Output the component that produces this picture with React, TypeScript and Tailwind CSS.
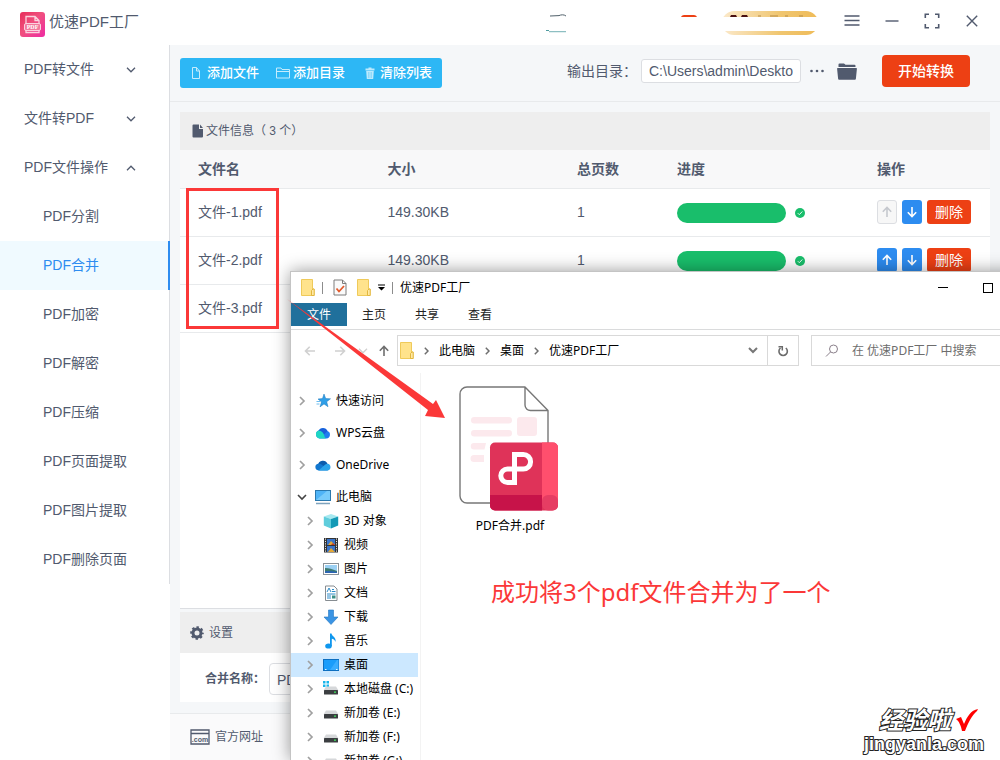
import React from 'react'

const menuGroups = [
  { label: 'PDF转文件', open: false },
  { label: '文件转PDF', open: false },
  { label: 'PDF文件操作', open: true },
]

const subItems = [
  'PDF分割',
  'PDF合并',
  'PDF加密',
  'PDF解密',
  'PDF压缩',
  'PDF页面提取',
  'PDF图片提取',
  'PDF删除页面',
]

const files = [
  { name: '文件-1.pdf', size: '149.30KB', pages: 1 },
  { name: '文件-2.pdf', size: '149.30KB', pages: 1 },
  { name: '文件-3.pdf', size: '149.30KB', pages: 1 },
]

type IconProps = { className?: string }

function Logo() {
  return (
    <svg width="25" height="25" viewBox="0 0 25 25">
      <defs>
        <linearGradient id="logo" x1="0" y1="0" x2="1" y2="1">
          <stop offset="0" stopColor="#e72d5a" />
          <stop offset="0.45" stopColor="#f0507e" />
          <stop offset="1" stopColor="#ee2ba4" />
        </linearGradient>
      </defs>
      <rect width="25" height="25" rx="3" fill="url(#logo)" />
      <path
        d="M6 13V4.5h9l4 4V13M15 4.5v4h4M6 18v2.5h13V18"
        fill="none"
        stroke="#fbd3df"
        strokeWidth="1.3"
      />
      <rect x="4.5" y="11.5" width="16" height="7" rx="1.5" fill="#f27a9d" stroke="#fbd3df" />
      <text
        x="12.5"
        y="17.2"
        fontSize="6"
        fontWeight="700"
        textAnchor="middle"
        fill="#fff"
        fontFamily="Liberation Serif, serif"
      >
        PDF
      </text>
    </svg>
  )
}

function Chevron({ className }: IconProps) {
  return (
    <svg width="10" height="6" viewBox="0 0 10 6" className={className}>
      <path d="M1 .8l4 4 4-4" fill="none" stroke="currentColor" strokeWidth="1.3" />
    </svg>
  )
}

function Promo() {
  return (
    <svg width="275" height="26" viewBox="0 0 275 26" aria-hidden="true">
      <defs>
        <linearGradient id="gold">
          <stop offset="0" stopColor="#fbe9cb" />
          <stop offset="0.6" stopColor="#f0c670" />
          <stop offset="1" stopColor="#efbb58" />
        </linearGradient>
      </defs>
      <path d="M5 6l9-.4M14 5.600c2-1 5-1.200 7 .4" stroke="#50606a" fill="none" />
      <path d="M4 21.500h17" stroke="#8dbfc2" strokeWidth="1.500" fill="none" />
      <path d="M136 7c1-2 3-2 4-2h8c1 0 3 0 4 2z" fill="#ed4014" />
      <rect x="177" y="1" width="96" height="24" rx="12" fill="url(#gold)" />
      <path d="M186 5h5l1 2h-7zM197 5h5l1 2h-7z" fill="#4a1010" />
      <path d="M213 6h3M225 6h8M240 6h3M254 6h4" stroke="#b78b45" />
      <rect x="0" y="7" width="275" height="14" fill="#fff" />
      <path d="M1 20.500h3" stroke="#4f9ba0" />
    </svg>
  )
}

function DocIcon({ className }: IconProps) {
  return (
    <svg width="12" height="14" viewBox="0 0 12 14" className={className} fill="currentColor">
      <path d="M1.500.5H7V5h4v7.500a1 1 0 0 1-1 1H1.500a1 1 0 0 1-1-1v-11a1 1 0 0 1 1-1z" />
      <path d="M8 .6L11 4H8z" />
    </svg>
  )
}

function YellowFolder() {
  return (
    <svg width="14" height="17" viewBox="0 0 14 17" className="shrink-0">
      <path d="M.5.5h11V10h1.500v6.500H.5z" fill="#ffe38c" stroke="#efca5a" />
      <path d="M10.500 16.500V11.500L12 10h1.200v6.500z" fill="#ffe9a6" stroke="#e2b73f" />
    </svg>
  )
}

function RightChevron({ className }: IconProps) {
  return (
    <svg width="5" height="8" viewBox="0 0 5 8" className={className}>
      <path d="M.8.8L4 4 .8 7.200" fill="none" stroke="currentColor" strokeWidth="1.500" />
    </svg>
  )
}

function Arrow({ className }: IconProps) {
  return (
    <svg width="12" height="12" viewBox="0 0 12 12" className={className}>
      <path d="M6 11V1.500M1.800 5.700L6 1.500l4.200 4.200" fill="none" stroke="currentColor" strokeWidth="1.600" />
    </svg>
  )
}

const drive = (
  <>
    <path d="M3 5.500h10l2.500 4H.5z" fill="#d6d8da" />
    <rect x="1" y="9" width="14" height="4.500" rx=".6" fill="#3b3e41" />
    <rect x="11" y="10.500" width="2" height="1.300" fill="#3fe05c" />
  </>
)

const treeIcons: Record<string, React.ReactNode> = {
  quick: (
    <>
      <path d="M9 1l1.700 4.600 4.800.2-3.800 3 1.300 4.900-4-2.800-4 3 1.500-4.900L3 6l4.500-.4z" fill="#2f9fe8" stroke="#1b77bb" strokeWidth=".5" />
      <path d="M1.500 8.500h3.500M1.500 11h3" stroke="#6bbdf0" />
    </>
  ),
  wps: (
    <>
      <path d="M4.500 13.500a4.200 4.200 0 0 1-1-8A5 5 0 0 1 12.500 6a3.900 3.900 0 0 1-1 7.500z" fill="#1f7df0" />
      <path d="M4.500 13.500a4.200 4.200 0 0 1-1-8c2.500-.6 5 1.200 5.500 4 .3 1.800 1 3.300 2 4z" fill="#1ed6c3" />
      <path d="M3.800 5.400a5 5 0 0 1 8.700.6L9 9.500C8.500 7.500 6.500 5.800 3.800 5.400z" fill="#1a5fd8" />
    </>
  ),
  onedrive: (
    <>
      <path d="M3 8a5 5 0 0 1 9.500-1.200L8 11z" fill="#0b5cad" />
      <path d="M3.500 13.500A3.400 3.400 0 0 1 3 6.800c2-.5 3.600.6 5 1.700l5 5z" fill="#1277cf" />
      <path d="M12.500 6.800a3.400 3.400 0 0 1 .3 6.700H3.500L8 9.500c1.500-1.500 3-2.700 4.500-2.700z" fill="#2aa4ea" />
    </>
  ),
  pc: (
    <>
      <rect x=".5" y="1.500" width="15" height="10" fill="#4fb4f7" stroke="#2b78ad" />
      <path d="M1 11L12 2h3v9z" fill="#77cbfb" />
      <path d="M1 14.500h14" stroke="#7ea3bd" strokeWidth="1.500" />
    </>
  ),
  cube: (
    <>
      <path d="M.8 3.500L8 1l7.200 2.500L8 6z" fill="#a7e9f0" />
      <path d="M.8 3.500L8 6v9.500L.8 12.500z" fill="#5fcddc" />
      <path d="M15.200 3.500L8 6v9.500l7.200-3z" fill="#1399b5" />
    </>
  ),
  video: (
    <>
      <rect x="1" y="1" width="14" height="14.500" fill="#333" />
      <path d="M2.500 1.500v14M13.500 1.500v14" stroke="#e8e8e8" strokeDasharray="1.200 1.200" />
      <rect x="4" y="2" width="8" height="6" fill="#3974c9" />
      <rect x="4" y="9" width="8" height="6" fill="#3974c9" />
      <path d="M5 8l3-4 4 4zM5 15l3-4 4 4z" fill="#e3a735" />
      <path d="M8 8l2-2 2 2z" fill="#c23a2b" />
    </>
  ),
  picture: (
    <>
      <rect x=".5" y="2.500" width="15" height="11" fill="#fff" stroke="#8a9299" />
      <rect x="2" y="4" width="12" height="8" fill="#9bd0f3" />
      <path d="M2 7c4 0 7 1 12 3v2H2z" fill="#3c7a70" />
      <path d="M2 10.500c4-1 8 0 12 .5v1H2z" fill="#2b64b4" />
    </>
  ),
  doc: (
    <>
      <path d="M2.500 1h8.500l3 3v11.500H2.500z" fill="#fff" stroke="#868c91" />
      <path d="M4 7l2-4 2 4M9 4.500h2M9 6.500h3.500M4 9h8.500M4 11h4M4 13h4" stroke="#2e8cc9" fill="none" />
      <rect x="9" y="10.500" width="3.500" height="3" fill="#3f8f87" />
    </>
  ),
  download: <path d="M5.500 1h5v7H15l-7 7.500L1 8h4.500z" fill="#3a94e4" stroke="#2477c1" strokeWidth=".6" />,
  music: (
    <>
      <ellipse cx="5.500" cy="13" rx="3.300" ry="2.600" fill="#0f97ee" />
      <path d="M7 13V.5h1.500c.5 3 5 3.500 4 8.500-.5-2-2-3-3.700-3.200V13z" fill="#0f97ee" />
    </>
  ),
  desktop: (
    <>
      <rect x=".5" y="2.500" width="15" height="11" fill="#1a9dfb" stroke="#0d6fc0" />
      <path d="M7 13l7-10h1.500v10z" fill="#39adff" />
      <path d="M2 12.500h1.500M13 12.500h1.500" stroke="#e9f5ff" />
    </>
  ),
  system: (
    <>
      <path d="M0 0h2.500v2.500H0zM3.500 0H6v2.500H3.500zM0 3.500h2.500V6H0zM3.500 3.500H6V6H3.500z" fill="#19b5ea" />
      {drive}
    </>
  ),
  drive,
}

const tree = [
  { icon: 'quick', label: '快速访问' },
  { icon: 'wps', label: 'WPS云盘' },
  { icon: 'onedrive', label: 'OneDrive' },
]

const pcChildren = [
  { icon: 'cube', label: '3D 对象' },
  { icon: 'video', label: '视频' },
  { icon: 'picture', label: '图片' },
  { icon: 'doc', label: '文档' },
  { icon: 'download', label: '下载' },
  { icon: 'music', label: '音乐' },
  { icon: 'desktop', label: '桌面', active: true },
  { icon: 'system', label: '本地磁盘 (C:)' },
  { icon: 'drive', label: '新加卷 (E:)' },
  { icon: 'drive', label: '新加卷 (F:)' },
  { icon: 'drive', label: '新加卷 (G:)' },
]

function TreeIcon({ name }: { name: string }) {
  return (
    <svg width="16" height="16" viewBox="0 0 16 16" className="mr-[5px] shrink-0">
      {treeIcons[name]}
    </svg>
  )
}

function TreeChevron() {
  return (
    <svg width="8" height="10" viewBox="0 0 8 10" className="mr-2 shrink-0">
      <path d="M1 1l4 4-4 4" fill="none" stroke="#a0a0a0" strokeWidth="1.700" />
    </svg>
  )
}

function Header() {
  return (
    <header className="flex h-[45px] shrink-0 items-center bg-white pl-5 pr-2">
      <span className="mt-1">
        <Logo />
      </span>
      <h1 className="ml-1 flex-1 text-[15px]">优速PDF工厂</h1>
      <Promo />
      <div className="ml-3 flex items-center pb-[3px]">
        <button aria-label="菜单" className="flex h-8 w-10 items-center justify-center">
          <svg width="16" height="12" viewBox="0 0 16 12" stroke="currentColor" strokeWidth="1.400">
            <path d="M.5 1h15M.5 5.500h15M.5 10h15" />
          </svg>
        </button>
        <button aria-label="最小化" className="flex h-8 w-10 items-center justify-center">
          <svg width="14" height="2" viewBox="0 0 14 2" fill="currentColor">
            <path d="M.5.3h13v1.400H.5z" />
          </svg>
        </button>
        <button aria-label="最大化" className="flex h-8 w-10 items-center justify-center">
          <svg width="16" height="16" viewBox="0 0 16 16" fill="none" stroke="currentColor" strokeWidth="1.600">
            <path d="M5 1.300H1.300V5M11 1.300h3.700V5M5 14.700H1.300V11M11 14.700h3.700V11" />
          </svg>
        </button>
        <button aria-label="关闭" className="flex h-8 w-10 items-center justify-center">
          <svg width="12" height="12" viewBox="0 0 12 12" stroke="currentColor" strokeWidth="1.400">
            <path d="M.8.8l10.400 10.400M11.200.8L.8 11.200" />
          </svg>
        </button>
      </div>
    </header>
  )
}

function Sidebar() {
  return (
    <aside className="w-[170px] shrink-0 bg-white text-sm">
      <nav className="border-r border-[#dcdee2]">
        {menuGroups.map((group) => (
          <button
            key={group.label}
            className="flex h-[49px] w-full items-center justify-between pr-[33px] pb-[2px] pl-6"
          >
            {group.label}
            <Chevron className={group.open ? 'mt-[2px] rotate-180' : 'mt-[2px]'} />
          </button>
        ))}
        {subItems.map((item) => (
          <a
            key={item}
            href="#"
            className={
              item === 'PDF合并'
                ? '-mr-px flex h-[49px] items-center border-r-2 border-[#2d8cf0] bg-[#f0faff] pb-[2px] pl-[43px] text-[#2d8cf0]'
                : 'flex h-[49px] items-center pb-[2px] pl-[43px]'
            }
          >
            {item}
          </a>
        ))}
      </nav>
    </aside>
  )
}

function Toolbar() {
  return (
    <div className="flex h-[57px] shrink-0 items-center border-b border-[#e8eaec] px-[10px]">
      <div className="flex h-[30px] items-center rounded-[3px] bg-[#2db7f5] px-[10px] text-[13px] font-medium text-white">
        <button className="flex items-center">
          <svg width="12" height="12" viewBox="0 0 12 12" fill="none" stroke="#c5ecfd" className="mr-[5px]">
            <path d="M2.500.5h4L9.500 4v7.500h-7zM6.500.5V4h3" />
          </svg>
          添加文件
        </button>
        <button className="ml-[17px] flex items-center">
          <svg width="14" height="12" viewBox="0 0 14 12" fill="none" stroke="#c5ecfd" className="mr-[3px]">
            <path d="M.5 11V1h4.500l1 1.500h7.500V11zM.5 4.500h13" />
          </svg>
          添加目录
        </button>
        <button className="ml-[19px] flex items-center">
          <svg width="12" height="12" viewBox="0 0 12 12" className="mr-1">
            <path d="M1.500 1.500h3v-1h3v1h3v2h-9zM2.200 4h7.600l-.6 8H2.800z" fill="#bdeafd" />
            <path d="M4.500 5v6M6 5v6M7.500 5v6" stroke="#6fcdf8" strokeWidth=".6" />
          </svg>
          清除列表
        </button>
      </div>
      <div className="ml-auto flex items-center pb-1">
        <label htmlFor="output" className="text-sm">
          输出目录：
        </label>
        <input
          id="output"
          readOnly
          defaultValue="C:\Users\admin\Deskto"
          className="ml-1 h-6 w-40 rounded-[3px] border border-[#dcdee2] bg-white px-[7px] text-sm"
        />
        <button aria-label="更多" className="ml-2">
          <svg width="16" height="4" viewBox="0 0 16 4" fill="currentColor">
            <circle cx="2.500" cy="2" r="1.300" />
            <circle cx="8" cy="2" r="1.300" />
            <circle cx="13.500" cy="2" r="1.300" />
          </svg>
        </button>
        <button aria-label="打开目录" className="ml-3">
          <svg width="20" height="17" viewBox="0 0 20 17" fill="currentColor">
            <path d="M1.500 4V1.500a1 1 0 0 1 1-1h4.500l1.500 1.300h9a1 1 0 0 1 1 1V4z" />
            <path d="M.8 5h18.400a.7.7 0 0 1 .7.8l-1 10a1 1 0 0 1-1 .9H2.100a1 1 0 0 1-1-.9l-1-10A.7.7 0 0 1 .8 5z" />
          </svg>
        </button>
        <button className="mr-[20px] ml-[25px] h-8 w-[88px] rounded bg-[#ed4014] text-sm font-medium text-white">
          开始转换
        </button>
      </div>
    </div>
  )
}

function FileTable() {
  return (
    <section className="flex min-h-0 flex-1 flex-col border-b border-[#dcdee2] bg-white">
      <h2 className="flex h-[38px] shrink-0 items-center bg-[#eeeeee] pl-3 text-xs">
        <DocIcon className="mr-[2px]" />
        文件信息（ 3 个）
      </h2>
      <table className="w-full table-fixed text-left text-sm">
        <colgroup>
          <col />
          <col />
          <col className="w-[100px]" />
          <col className="w-[200px]" />
          <col className="w-[131px]" />
        </colgroup>
        <thead>
          <tr className="h-[38px] border-b border-[#e8eaec] bg-[#f8f8f9]">
            <th className="pl-[18px]">文件名</th>
            <th className="pl-[18px]">大小</th>
            <th className="pl-[18px]">总页数</th>
            <th className="pl-[18px]">进度</th>
            <th className="pl-[18px]">操作</th>
          </tr>
        </thead>
        <tbody>
          {files.map((file, i) => (
            <tr key={file.name} className="h-12 border-b border-[#e8eaec]">
              <td className="pl-[18px]">{file.name}</td>
              <td className="pl-[18px]">{file.size}</td>
              <td className="pl-[18px]">{file.pages}</td>
              <td className="pl-[18px]">
                <div className="flex items-center pt-px">
                  <div className="h-5 w-[109px] rounded-full bg-[#19be6b]" />
                  <svg width="10" height="10" viewBox="0 0 10 10" className="ml-[9px]">
                    <circle cx="5" cy="5" r="5" fill="#19be6b" />
                    <path d="M2.800 5.200l1.500 1.500 3-3.200" fill="none" stroke="#e8fbf1" />
                  </svg>
                </div>
              </td>
              <td className="pl-[18px]">
                <div className="flex gap-[5px]">
                  <button
                    aria-label="上移"
                    disabled={i === 0}
                    className={
                      i === 0
                        ? 'flex h-6 w-5 items-center justify-center rounded-[3px] border border-[#dcdee2] bg-[#f7f7f7] text-[#c5c8ce]'
                        : 'flex h-6 w-5 items-center justify-center rounded-[3px] bg-[#2d8cf0] text-white'
                    }
                  >
                    <Arrow className="shrink-0" />
                  </button>
                  <button
                    aria-label="下移"
                    className="flex h-6 w-5 items-center justify-center rounded-[3px] bg-[#2d8cf0] text-white"
                  >
                    <Arrow className="shrink-0 rotate-180" />
                  </button>
                  <button className="h-6 w-11 rounded-[3px] bg-[#ed4014] text-sm text-white">
                    删除
                  </button>
                </div>
              </td>
            </tr>
          ))}
        </tbody>
      </table>
    </section>
  )
}

function Settings() {
  return (
    <section className="mt-[3px] mb-[11px] shrink-0 bg-white">
      <h2 className="flex h-[41px] items-center bg-[#eeeeee] pl-[10px] text-xs">
        <svg width="14" height="14" viewBox="0 0 14 14" className="mr-[5px]">
          <circle cx="7" cy="7" r="4" fill="none" stroke="currentColor" strokeWidth="3" />
          <circle cx="7" cy="7" r="5.700" fill="none" stroke="currentColor" strokeWidth="2.200" strokeDasharray="2.400 2.077" strokeDashoffset="1.200" />
        </svg>
        设置
      </h2>
      <div className="flex h-[49px] items-center pt-[2px] pl-[25px]">
        <label htmlFor="merge-name" className="mr-1 text-xs font-bold">
          合并名称：
        </label>
        <input
          id="merge-name"
          defaultValue="PDF合并"
          className="h-8 w-[200px] rounded border border-[#dcdee2] px-[7px] text-sm"
        />
      </div>
    </section>
  )
}

function Footer() {
  return (
    <footer className="flex h-[47px] shrink-0 items-center border-t border-[#e8eaec] bg-[#fafafb] pl-5 text-xs">
      <a href="#" className="flex items-center gap-[5px]">
        <svg width="20" height="16" viewBox="0 0 20 16">
          <path d="M1 1h18v14H1zM1 4.500h18" fill="none" stroke="currentColor" strokeWidth="1.300" />
          <text x="10" y="13" fontSize="7" fontWeight="700" textAnchor="middle" fill="currentColor" fontFamily="Liberation Sans, sans-serif">
            .com
          </text>
        </svg>
        官方网址
      </a>
    </footer>
  )
}

function PdfFile() {
  return (
    <svg width="102" height="126" viewBox="0 0 102 126">
      <path
        d="M66 1H8a7 7 0 0 0-7 7v102a7 7 0 0 0 7 7h81V24.500zM66 1v18a5.500 5.500 0 0 0 5.500 5.500H89"
        fill="#fff"
        stroke="#777"
        strokeWidth="1.400"
        strokeLinejoin="round"
      />
      <g fill="#fce9ed">
        <rect x="12" y="31" width="41" height="6.500" rx="3.200" />
        <rect x="12" y="44" width="41" height="6.500" rx="3.200" />
        <path d="M15 57h12l-1.500 6.500H15a3.200 3.200 0 0 1 0-6.500zM15 69h10v7H15a3.200 3.200 0 0 1 0-7z" />
        <rect x="58" y="31" width="20" height="19" rx="3" />
      </g>
      <rect x="31" y="56.500" width="68" height="68" rx="5" fill="#df3359" />
      <path d="M83 56.500h11a5 5 0 0 1 5 5V119H83z" fill="#ff4f6d" />
      <path d="M31 109h52v15.500H36a5 5 0 0 1-5-5z" fill="#c71349" />
      <rect x="83" y="109" width="16" height="15.500" rx="6" fill="#e63d63" />
      <path
        d="M55.500 99V68.500h8.800a7.300 7.300 0 0 1 0 14.600H48.500a6.700 6.700 0 0 0 0 13.400h7"
        fill="none"
        stroke="#fff"
        strokeWidth="5"
      />
    </svg>
  )
}

function Explorer() {
  return (
    <div className="absolute top-[271px] -right-[46px] bottom-0 left-[290px] flex flex-col overflow-hidden border-t border-l border-[#c4c4c4] bg-white font-['Noto_Sans','Noto_Sans_CJK_SC',sans-serif] text-xs text-black shadow-[0_0_16px_rgba(0,0,0,0.4)]">
      <div className="flex h-[31px] shrink-0 items-center gap-[7px] pl-[10px]">
        <YellowFolder />
        <span className="h-3 w-px bg-[#8c8c8c]" />
        <svg width="20" height="17" viewBox="0 0 20 17">
          <path d="M4 1h8.500l3.500 3.500V16H4zM12.500 1v3.500H16" fill="#fafafa" stroke="#7c7c7c" />
          <path d="M6.500 9.500l2.500 3 5-5.500" fill="none" stroke="#e2592b" strokeWidth="1.800" />
        </svg>
        <YellowFolder />
        <svg width="7" height="7" viewBox="0 0 7 7">
          <path d="M0 .5h7v1H0zM0 3h7L3.500 6.500z" />
        </svg>
        <span className="h-3 w-px bg-[#8c8c8c]" />
        <span className="flex-1">优速PDF工厂</span>
        <button aria-label="最小化" className="flex h-full w-[45px] items-center justify-center">
          <span className="h-px w-[10px] bg-black" />
        </button>
        <button aria-label="最大化" className="mr-[43px] flex h-full w-[31px] items-center justify-center">
          <span className="h-[10px] w-[10px] border border-black" />
        </button>
      </div>
      <div className="flex h-[27px] shrink-0 gap-px border-b border-[#dadbdc] text-[#222]">
        <button className="h-[23px] w-14 bg-[#20709c] text-white">文件</button>
        <button className="h-[23px] px-[14px]">主页</button>
        <button className="h-[23px] px-[14px]">共享</button>
        <button className="h-[23px] px-[14px]">查看</button>
      </div>
      <div className="mt-[5px] flex h-[31px] shrink-0 items-center pr-[10px]">
        <div className="flex w-[106px] items-center pl-[13px] text-[#d0d0d0]">
          <Arrow className="shrink-0 -rotate-90" />
          <Arrow className="ml-[18px] shrink-0 rotate-90" />
          <Chevron className="ml-3 w-[10px] shrink-0" />
          <Arrow className="ml-[10px] shrink-0 text-[#6e6e6e]" />
        </div>
        <div className="flex h-full flex-1 items-center border border-[#d9d9d9]">
          <div className="flex flex-1 items-center gap-[10px] pl-[2px]">
            <YellowFolder />
            <RightChevron className="text-[#6e6e6e]" />
            <span>此电脑</span>
            <RightChevron className="text-[#6e6e6e]" />
            <span>桌面</span>
            <RightChevron className="text-[#6e6e6e]" />
            <span>优速PDF工厂</span>
          </div>
          <svg width="10" height="7" viewBox="0 0 10 7" className="mr-[9px]">
            <path d="M1 1l4 4 4-4" fill="none" stroke="#777" strokeWidth="2" />
          </svg>
          <button aria-label="刷新" className="flex h-full w-[31px] items-center justify-center border-l border-[#d9d9d9]">
            <svg width="12" height="12" viewBox="0 0 12 12">
              <path d="M8.800 3A4.200 4.200 0 1 1 3.500 3" fill="none" stroke="#6b6b6b" strokeWidth="1.600" />
              <path d="M1.500 1.800h3.800v3.700" fill="none" stroke="#6b6b6b" strokeWidth="1.500" />
            </svg>
          </button>
        </div>
        <label className="ml-3 flex h-full w-[225px] items-center border border-[#d9d9d9] pl-[13px]">
          <svg width="14" height="14" viewBox="0 0 14 14" fill="none" stroke="#8a7f8a" className="mr-[13px]">
            <circle cx="8.500" cy="5" r="4" />
            <path d="M5.500 8L1 12.500" />
          </svg>
          <input
            aria-label="搜索"
            placeholder="在 优速PDF工厂 中搜索"
            className="min-w-0 flex-1 outline-none placeholder:text-[#6d6d6d]"
          />
        </label>
      </div>
      <div className="mt-[7px] flex min-h-0 flex-1">
        <div className="w-[130px] shrink-0 overflow-hidden border-r border-[#f3f3f3] pt-4 pr-[2px] whitespace-nowrap">
          {tree.map((node) => (
            <div key={node.label} className="mb-2 flex h-6 items-center pl-2">
              <TreeChevron />
              <TreeIcon name={node.icon} />
              {node.label}
            </div>
          ))}
          <div className="flex h-6 items-center pl-[6px]">
            <svg width="10" height="7" viewBox="0 0 10 7" className="mr-2">
              <path d="M1 1l4 4 4-4" fill="none" stroke="#444" strokeWidth="1.600" />
            </svg>
            <TreeIcon name="pc" />
            此电脑
          </div>
          {pcChildren.map((node) => (
            <div
              key={node.label}
              className={
                node.active
                  ? 'flex h-6 items-center bg-[#cce8ff] pl-4'
                  : 'flex h-6 items-center pl-4'
              }
            >
              <TreeChevron />
              <TreeIcon name={node.icon} />
              {node.label}
            </div>
          ))}
        </div>
        <div className="pt-[13px] pl-[38px]">
          <div className="flex w-[102px] flex-col items-center gap-1">
            <PdfFile />
            <span className="leading-5">PDF合并.pdf</span>
          </div>
        </div>
      </div>
    </div>
  )
}

// red box, arrow and caption drawn on top of both windows
function Annotations() {
  return (
    <div className="pointer-events-none absolute inset-0 font-['Noto_Sans','Noto_Sans_CJK_SC',sans-serif]">
      <div className="absolute top-[188px] left-[186px] h-[141px] w-[93px] border-3 border-[#fb3838]" />
      <svg width="160" height="122" viewBox="0 0 160 122" className="absolute top-[299px] left-[287px]">
        <path d="M0 0l146 105 3-4 9 18-20-2 3-6z" fill="#fb3838" />
      </svg>
      <p className="absolute top-[574px] left-[491px] text-2xl leading-9 text-[#fb3838]">
        成功将3个pdf文件合并为了一个
      </p>
      <div className="absolute right-4 bottom-[6px] flex flex-col items-end font-bold text-white [paint-order:stroke_fill] [-webkit-text-stroke:2px_#222]">
        <div className="flex items-center pr-[5px]">
          <span className="text-2xl leading-7 italic">经验啦</span>
          <svg width="24" height="24" viewBox="0 0 24 24" className="ml-1">
            <path d="M1 11l5-2 3 7C12 9 16 2 23 1l-1 2C17 7 13 15 10 23H7C6 18 4 13 1 11z" fill="#f00" />
          </svg>
        </div>
        <span className="font-['Liberation_Sans',sans-serif] text-lg leading-5">jingyanla.com</span>
      </div>
    </div>
  )
}

export default function App() {
  return (
    <div className="relative flex h-screen flex-col overflow-hidden bg-white font-['Liberation_Sans','Noto_Sans_CJK_SC',sans-serif] text-[#515a6e]">
      <Header />
      <div className="flex min-h-0 flex-1">
        <Sidebar />
        <main className="flex min-w-0 flex-1 flex-col bg-[#f5f7f9]">
          <Toolbar />
          <div className="flex min-h-0 flex-1 flex-col px-[10px] pt-[10px]">
            <FileTable />
            <Settings />
          </div>
          <Footer />
        </main>
      </div>
      <Explorer />
      <Annotations />
    </div>
  )
}
